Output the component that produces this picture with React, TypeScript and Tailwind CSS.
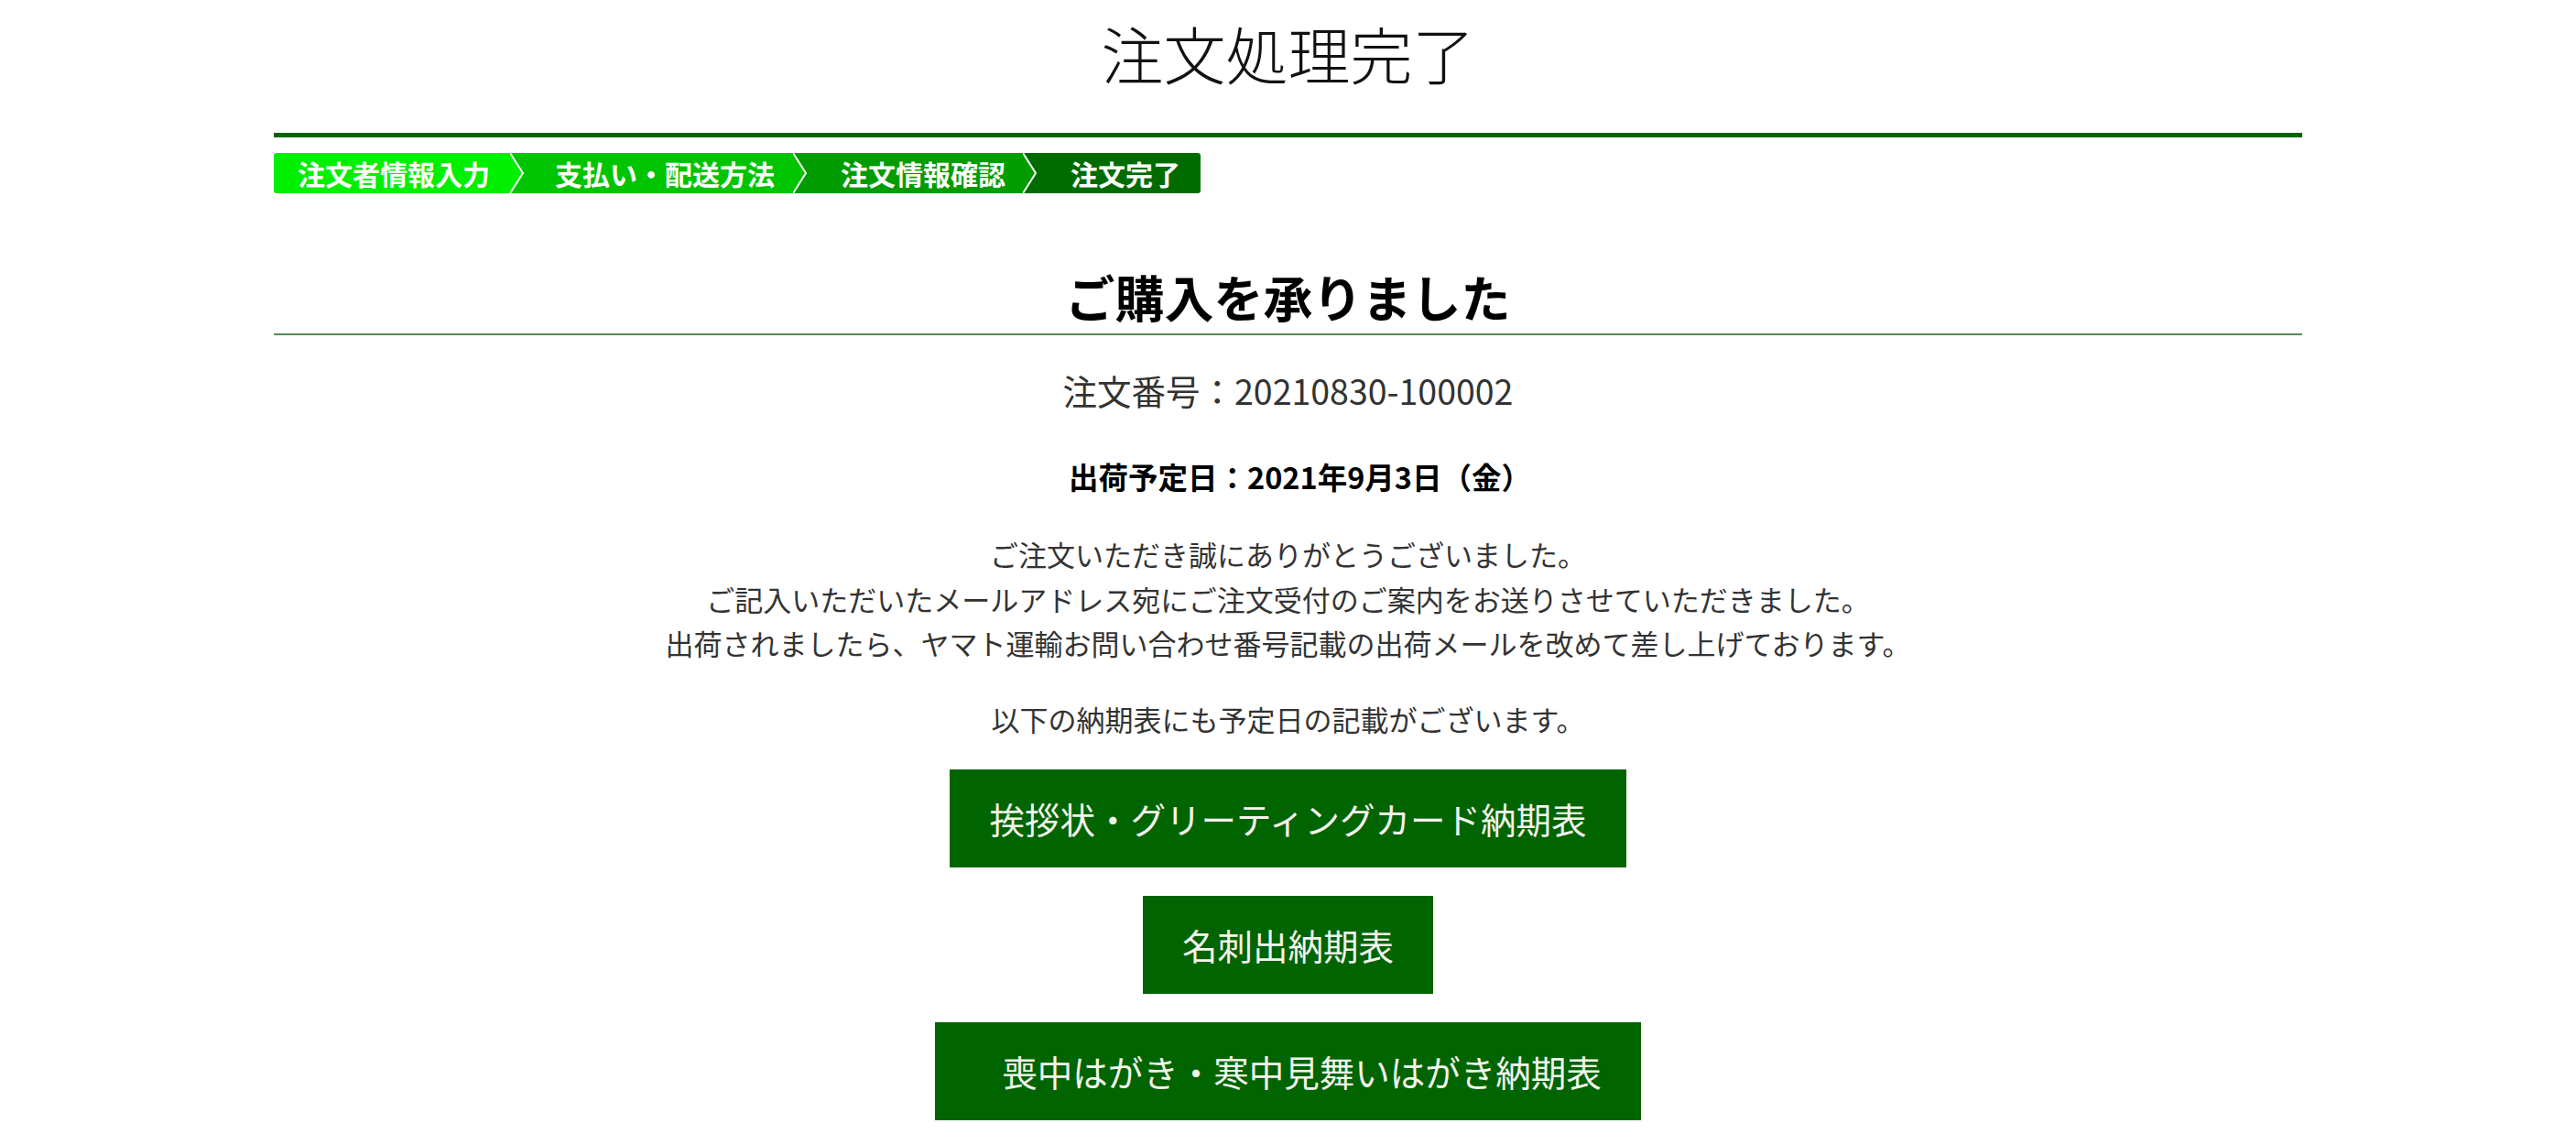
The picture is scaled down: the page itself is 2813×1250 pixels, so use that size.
import React from 'react';

// Order completion page (注文処理完了)

const steps = [
  { label: '注文者情報入力', bg: 'bg-[#00f000]', fill: '#00f000', next: '#00c400', pad: 'pl-[26px] pr-[22px] rounded-l-[3px]' },
  { label: '支払い・配送方法', bg: 'bg-[#00c400]', fill: '#00c400', next: '#009c00', pad: 'pl-[33px] pr-[20px]' },
  { label: '注文情報確認', bg: 'bg-[#009c00]', fill: '#009c00', next: '#006c00', pad: 'pl-[36px] pr-[19px]' },
  { label: '注文完了', bg: 'bg-[#006c00]', fill: '#006c00', next: '', pad: 'pl-[36px] pr-[22px] rounded-r-[3px]' },
];

const scheduleLinks = [
  { label: '挨拶状・グリーティングカード納期表', pad: 'px-[43px]' },
  { label: '名刺出納期表', pad: 'px-[43px]' },
  { label: '喪中はがき・寒中見舞いはがき納期表', pad: 'pl-[73px] pr-[43px]' },
];

function StepBar() {
  return (
    <div className="mt-[17px] flex h-[44px]">
      {steps.map((step) => (
        <div key={step.label} className="flex">
          <div className={`${step.bg} ${step.pad} text-[30px] leading-[44px] font-bold text-white whitespace-nowrap`}>
            {step.label}
          </div>
          {step.next && (
            <svg width="16" height="44" viewBox="0 0 16 44" className="block shrink-0">
              <rect x="0" y="0" width="16" height="44" fill={step.next} />
              <polygon points="0,0 14,22 0,44" fill={step.fill} />
              <polyline points="0,0 14,22 0,44" fill="none" stroke="#ffffff" strokeWidth="2" />
            </svg>
          )}
        </div>
      ))}
    </div>
  );
}

export default function App() {
  return (
    <div
      className="min-h-screen bg-white"
      style={{ fontFamily: '"Noto Sans CJK JP", "Noto Sans", sans-serif' }}
    >
      <div className="mx-auto w-[2215px]">
        {/* Page title */}
        <h1 className="pt-[13px] pb-[42px] text-center text-[68px] leading-[90px] font-light text-[#111]">
          注文処理完了
        </h1>
        <div className="h-[5px] bg-[#006400]" />

        {/* Checkout steps */}
        <StepBar />

        {/* Heading */}
        <h2 className="mt-[83px] pb-[10px] border-b-2 border-[#4f8f4f] text-center text-[54px] leading-[60px] font-bold text-black">
          ご購入を承りました
        </h2>

        <div className="flex flex-col items-center text-[#333]">
          <p className="mt-[33px] text-[37.5px] leading-[54px]">注文番号：20210830-100002</p>
          <p className="mt-[44px] pl-[26px] text-[32.5px] leading-[46px] font-bold text-black">
            出荷予定日：2021年9月3日（金）
          </p>
          <p className="mt-[38px] text-center text-[31px] leading-[48.5px]">
            ご注文いただき誠にありがとうございました。
            <br />
            ご記入いただいたメールアドレス宛にご注文受付のご案内をお送りさせていただきました。
            <br />
            出荷されましたら、ヤマト運輸お問い合わせ番号記載の出荷メールを改めて差し上げております。
          </p>
          <p className="mt-[34px] text-[31px] leading-[48px]">以下の納期表にも予定日の記載がございます。</p>

          {/* Schedule links */}
          <div className="mt-[31px] flex flex-col items-center gap-[31px]">
            {scheduleLinks.map((link) => (
              <a
                key={link.label}
                href="#"
                className={`${link.pad} bg-[#006400] py-[25px] text-[38.5px] leading-[57px] text-[#f4f4ec] whitespace-nowrap`}
              >
                {link.label}
              </a>
            ))}
          </div>
        </div>
      </div>
    </div>
  );
}
